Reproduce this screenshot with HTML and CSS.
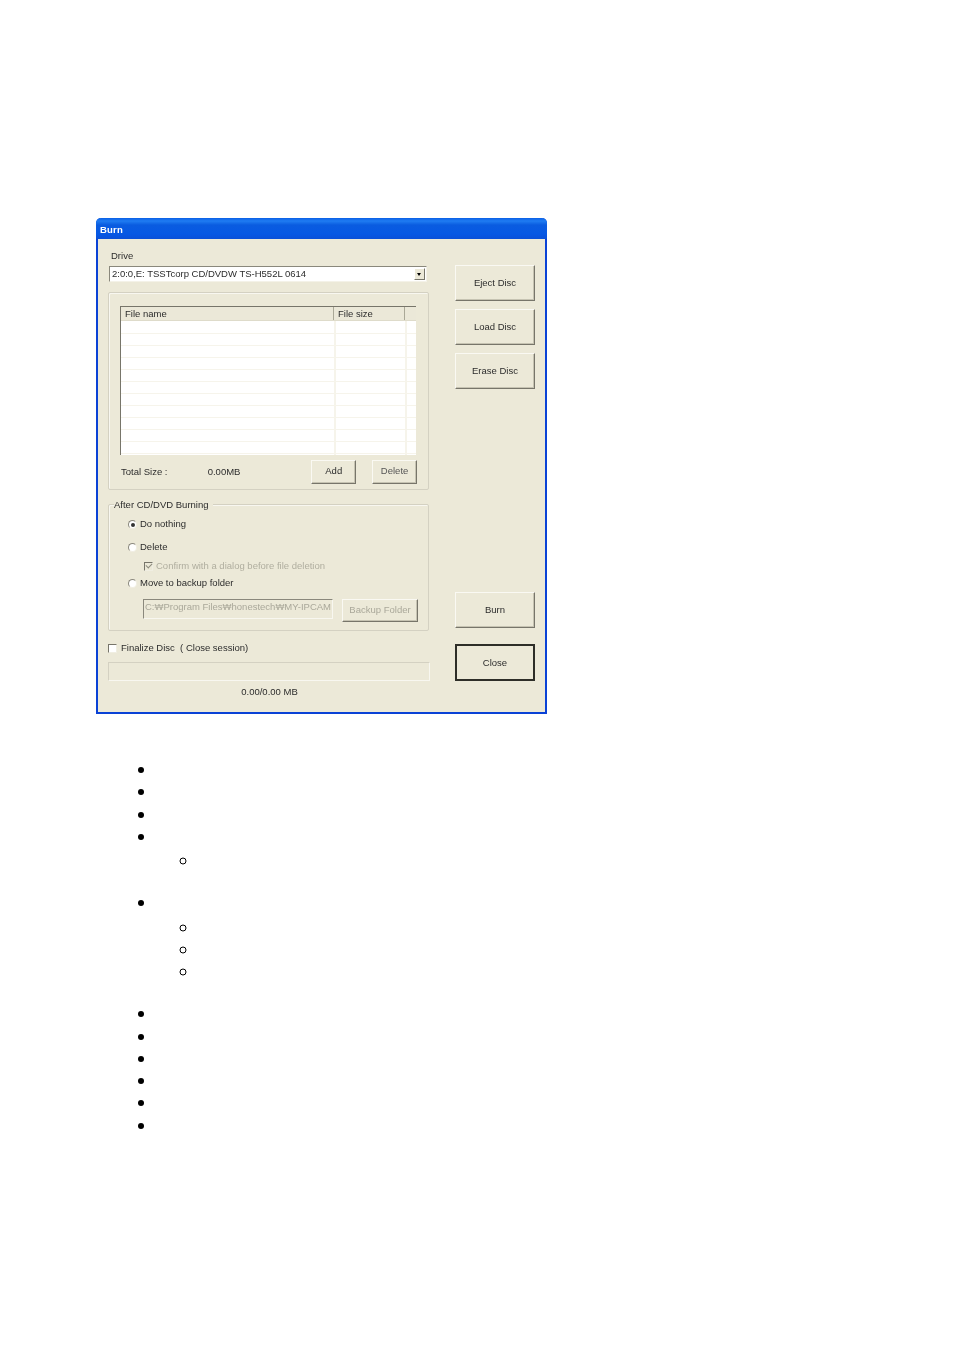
FILE: index.html
```html
<!DOCTYPE html>
<html lang="en">
  <head>
    <meta charset="UTF-8" />
    <title>Burn</title>
    <link rel="stylesheet" href="styles.css">
  </head>
  <body>
    <!-- Burn dialog -->
    <div class="dialog">
      <div class="title-bar">Burn</div>
      <div class="dialog-body">
        <div class="left-col">
          <div class="drive-label">Drive</div>
          <div class="combo">
            <span class="combo-text">2:0:0,E: TSSTcorp CD/DVDW TS-H552L 0614</span>
            <span class="combo-arrow"></span>
          </div>

          <div class="group files">
            <div class="list">
              <div class="list-head">
                <span class="col-name">File name</span>
                <span class="col-size">File size</span>
                <span class="col-rest"></span>
              </div>
              <div class="list-rows"></div>
            </div>
            <div class="files-foot">
              <span class="total-label">Total Size :</span>
              <span class="total-value">0.00MB</span>
              <button class="btn btn-add">Add</button>
              <button class="btn btn-delete">Delete</button>
            </div>
          </div>

          <div class="group after">
            <span class="legend">After CD/DVD Burning</span>
            <div class="option opt-nothing"><span class="radio checked"></span>Do nothing</div>
            <div class="option opt-delete"><span class="radio"></span>Delete</div>
            <div class="option opt-confirm disabled"><span class="check checked"></span>Confirm with a dialog before file deletion</div>
            <div class="option opt-move"><span class="radio"></span>Move to backup folder</div>
            <div class="backup-row">
              <div class="path-box">C:₩Program Files₩honestech₩MY-IPCAM</div>
              <button class="btn btn-backup">Backup Folder</button>
            </div>
          </div>

          <div class="option finalize"><span class="check"></span>Finalize Disc&nbsp; ( Close session)</div>
          <div class="progress"></div>
          <div class="progress-text">0.00/0.00 MB</div>
        </div>

        <div class="right-col">
          <button class="btn btn-side">Eject Disc</button>
          <button class="btn btn-side">Load Disc</button>
          <button class="btn btn-side">Erase Disc</button>
          <button class="btn btn-side btn-burn">Burn</button>
          <button class="btn btn-side btn-close">Close</button>
        </div>
      </div>
    </div>

    <!-- Bullets whose text is blank in the document -->
    <ul class="bullets">
      <li>&nbsp;</li>
      <li>&nbsp;</li>
      <li>&nbsp;</li>
      <li>&nbsp;
        <ul class="sub">
          <li>&nbsp;</li>
        </ul>
      </li>
      <li>&nbsp;
        <ul class="sub">
          <li>&nbsp;</li>
          <li>&nbsp;</li>
          <li>&nbsp;</li>
        </ul>
      </li>
      <li>&nbsp;</li>
      <li>&nbsp;</li>
      <li>&nbsp;</li>
      <li>&nbsp;</li>
      <li>&nbsp;</li>
      <li>&nbsp;</li>
    </ul>
  </body>
</html>
```

FILE: styles.css
```css
* {
  margin: 0;
  padding: 0;
  box-sizing: border-box;
}

html,
body {
  background: #fff;
}

body {
  width: 954px;
  height: 1349px;
  padding: 218px 0 0 96px;
  overflow: hidden;
  font-family: "Liberation Sans", Arial, sans-serif;
}

/* dialog window */
.dialog {
  width: 451px;
  height: 496px;
  background: #ece9d8;
  border: 2px solid #0a42d6;
  border-top: none;
  border-radius: 5px 5px 0 0;
  font-size: 9.5px;
  line-height: 12px;
  color: #2c2c2c;
  filter: blur(0.5px);
}

.title-bar {
  height: 21px;
  margin: 0 -2px;
  padding: 6px 0 0 4px;
  background: linear-gradient(to bottom, #0a5fe6 0, #1f7cf2 3px, #0a5ce0 7px, #0658e4 16px, #0a50d8 21px);
  border-radius: 5px 5px 0 0;
  color: #fff;
  font-weight: bold;
  font-size: 9.5px;
  letter-spacing: 0.2px;
}

.dialog-body {
  display: flex;
  padding-left: 10px;
}

.left-col {
  width: 321px;
}

.drive-label {
  padding: 11px 0 0 3px;
  height: 27px;
}

.combo {
  display: flex;
  align-items: center;
  justify-content: space-between;
  width: 318px;
  height: 16px;
  margin-left: 1px;
  background: #fff;
  border: 1px solid;
  border-color: #8a887c #f4f2e8 #f4f2e8 #8a887c;
  padding: 0 0 0 2px;
}

.combo-arrow {
  position: relative;
  width: 11px;
  height: 12px;
  margin-right: 1px;
  background: #ece9d8;
  border: 1px solid;
  border-color: #fff #77756a #77756a #fff;
}

.combo-arrow::after {
  content: "";
  position: absolute;
  left: 2px;
  top: 4px;
  border: 2.5px solid transparent;
  border-top: 3px solid #000;
  border-bottom: none;
}

.group {
  border: 1px solid #d4d1c2;
  box-shadow: inset 1px 1px 0 #f8f7f0;
  border-radius: 2px;
}

.files {
  height: 198px;
  margin-top: 10px;
  padding: 13px 12px 0 11px;
}

.list {
  width: 296px;
  height: 149px;
  background: #fff;
  border-top: 1px solid #77756a;
  border-left: 1px solid #77756a;
}

.list-head {
  display: flex;
  height: 14px;
  background: #ebe8d8;
  border-bottom: 1px solid #dedbca;
  line-height: 13px;
}

.list-head span {
  padding-left: 4px;
  border-right: 1px solid #aaa897;
}

.list-head .col-rest {
  flex: 1;
  border-right: none;
}

.col-name {
  width: 213px;
}

.col-size {
  width: 71px;
}

.list-rows {
  height: 134px;
  background-color: #fff;
  background-image:
    linear-gradient(to right, transparent 213px, #f6f4eb 213px, #f6f4eb 215px, transparent 215px, transparent 284px, #f6f4eb 284px, #f6f4eb 286px, transparent 286px),
    repeating-linear-gradient(to bottom, transparent 0, transparent 11px, #f6f4eb 11px, #f6f4eb 12px);
  background-position: 0 0, 0 1px;
}

.files-foot {
  display: flex;
  align-items: center;
  height: 24px;
  margin-top: 5px;
  padding-left: 1px;
  width: 297px;
}

.total-label {
  width: 87px;
}

.total-value {
  width: 104px;
}

.btn {
  padding-bottom: 1px;
  background: #ece9d8;
  border: 1px solid;
  border-color: #faf9f3 #77756a #77756a #faf9f3;
  box-shadow: inset -1px -1px 0 #c6c3b2;
  font-family: inherit;
  font-size: 9.5px;
  color: #2c2c2c;
}

.btn-add,
.btn-delete {
  width: 45px;
  height: 24px;
  padding-bottom: 4px;
}

.btn-delete {
  margin-left: 16px;
  color: #555;
}

.after {
  position: relative;
  height: 127px;
  margin-top: 14px;
  padding: 13px 0 0 19px;
}

.legend {
  position: absolute;
  left: 5px;
  top: -6px;
  padding-right: 4px;
  background: #ece9d8;
}

.option {
  display: flex;
  align-items: center;
  height: 13px;
  padding-bottom: 2px;
}

.radio {
  position: relative;
  width: 9px;
  height: 9px;
  margin: 2px 3px 0 0;
  background: #fff;
  border: 1px solid;
  border-color: #8a887c #f0eee2 #f0eee2 #8a887c;
  border-radius: 50%;
}

.radio.checked::after {
  content: "";
  position: absolute;
  left: 1.5px;
  top: 1.5px;
  width: 4px;
  height: 4px;
  border-radius: 50%;
  background: #333;
}

.check {
  position: relative;
  width: 9px;
  height: 9px;
  margin: 2px 4px 0 0;
  background: #fff;
  border: 1px solid;
  border-color: #77756a #f0eee2 #f0eee2 #77756a;
}

.opt-delete {
  margin-top: 10px;
}

.opt-confirm {
  margin: 6px 0 0 16px;
  color: #b0ae9f;
}

.opt-confirm .check {
  background: #ece9d8;
  margin-right: 3px;
}

.opt-confirm .check::after {
  content: "";
  position: absolute;
  left: 1px;
  top: 0;
  width: 5px;
  height: 3px;
  border-left: 1px solid #8e8c7e;
  border-bottom: 1px solid #8e8c7e;
  transform: rotate(-45deg);
}

.opt-move {
  margin-top: 4px;
}

.backup-row {
  display: flex;
  align-items: flex-start;
  margin: 9px 0 0 15px;
}

.path-box {
  width: 190px;
  height: 20px;
  padding: 1px 0 0 1px;
  overflow: hidden;
  white-space: nowrap;
  background: #ece9d8;
  border: 1px solid;
  border-color: #8a887c #f8f7f0 #f8f7f0 #8a887c;
  color: #aaa89a;
}

.btn-backup {
  width: 76px;
  height: 23px;
  margin-left: 9px;
  padding-bottom: 3px;
  color: #aaa89a;
}

.finalize {
  margin-top: 11px;
}

.progress {
  height: 19px;
  width: 322px;
  margin-top: 7px;
  border: 1px solid;
  border-color: #d4d1c2 #f8f7f0 #f8f7f0 #d4d1c2;
}

.progress-text {
  margin-top: 5px;
  padding-left: 2px;
  text-align: center;
}

.right-col {
  display: flex;
  flex-direction: column;
  width: 80px;
  margin-left: 26px;
  padding-top: 26px;
}

.btn-side {
  width: 80px;
  height: 36px;
  margin-bottom: 8px;
}

.btn-burn {
  margin-top: 195px;
  margin-bottom: 16px;
}

.btn-close {
  height: 37px;
  border: 2px solid #2e2e28;
  box-shadow: none;
}

/* page list below the dialog */
.bullets {
  margin-top: 44px;
  padding-left: 61px;
  font-family: "Liberation Serif", serif;
  font-size: 20px;
  line-height: 22.25px;
  color: #000;
  list-style: disc;
}

.sub {
  margin: 2px 0 20px;
  padding-left: 42px;
  list-style: circle;
}
```
